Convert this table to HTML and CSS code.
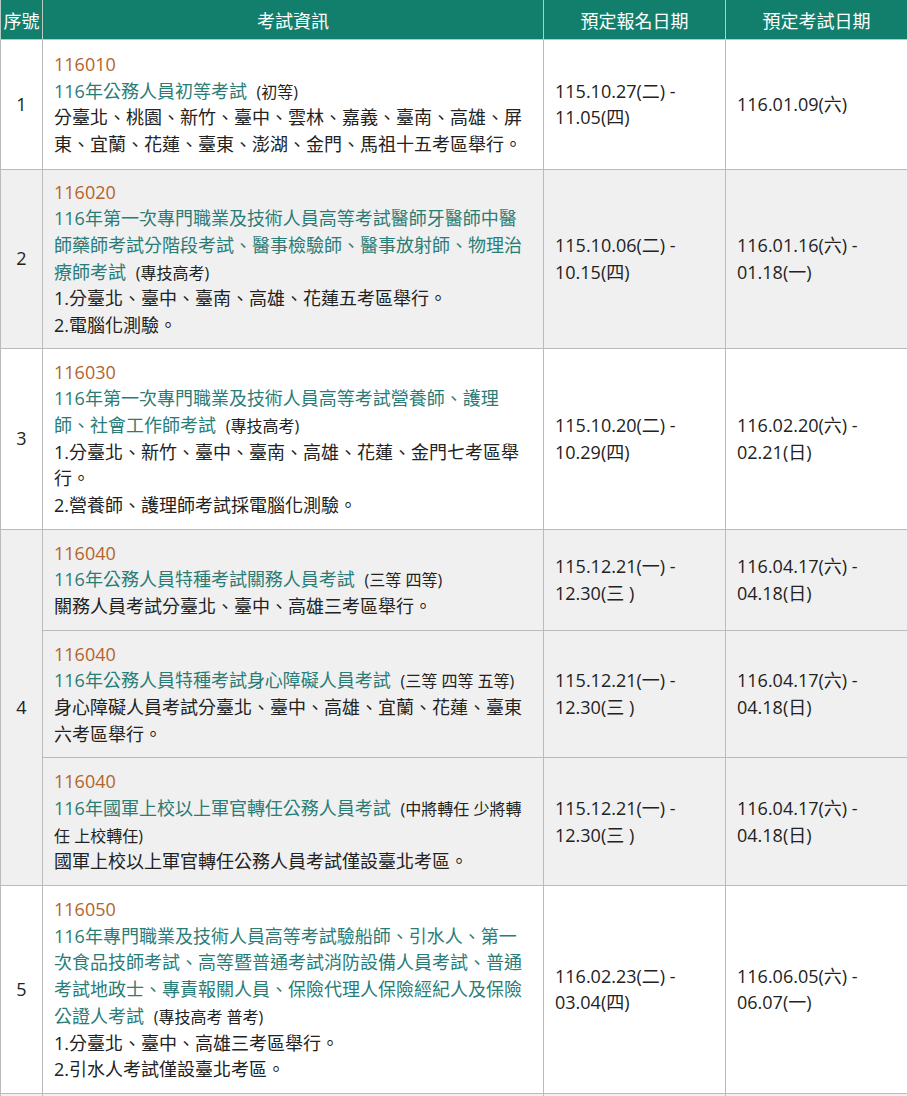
FILE: index.html
```html
<!DOCTYPE html>
<html lang="zh-Hant">
<head>
<meta charset="utf-8">
<title>考試日程</title>
<link rel="stylesheet" href="styles.css">
</head>
<body>
<table class="sched">
  <colgroup>
    <col class="c-no">
    <col class="c-info">
    <col class="c-date">
    <col class="c-date">
  </colgroup>
  <thead>
    <tr>
      <th>序號</th>
      <th>考試資訊</th>
      <th>預定報名日期</th>
      <th>預定考試日期</th>
    </tr>
  </thead>
  <tbody>
    <tr class="first">
      <td class="no">1</td>
      <td class="info">
        <div class="code">116010</div>
        <div><span class="title">116年公務人員初等考試</span> <span class="lvl">(初等)</span></div>
        <div>分臺北、桃園、新竹、臺中、雲林、嘉義、臺南、高雄、屏東、宜蘭、花蓮、臺東、澎湖、金門、馬祖十五考區舉行。</div>
      </td>
      <td class="date">115.10.27(二) -<br>11.05(四)</td>
      <td class="date">116.01.09(六)</td>
    </tr>
    <tr class="alt tight">
      <td class="no">2</td>
      <td class="info">
        <div class="code">116020</div>
        <div><span class="title">116年第一次專門職業及技術人員高等考試醫師牙醫師中醫師藥師考試分階段考試、醫事檢驗師、醫事放射師、物理治療師考試</span> <span class="lvl">(專技高考)</span></div>
        <div>1.分臺北、臺中、臺南、高雄、花蓮五考區舉行。</div>
        <div>2.電腦化測驗。</div>
      </td>
      <td class="date">115.10.06(二) -<br>10.15(四)</td>
      <td class="date">116.01.16(六) -<br>01.18(一)</td>
    </tr>
    <tr>
      <td class="no">3</td>
      <td class="info">
        <div class="code">116030</div>
        <div><span class="title">116年第一次專門職業及技術人員高等考試營養師、護理師、社會工作師考試</span> <span class="lvl">(專技高考)</span></div>
        <div>1.分臺北、新竹、臺中、臺南、高雄、花蓮、金門七考區舉行。</div>
        <div>2.營養師、護理師考試採電腦化測驗。</div>
      </td>
      <td class="date">115.10.20(二) -<br>10.29(四)</td>
      <td class="date">116.02.20(六) -<br>02.21(日)</td>
    </tr>
    <tr class="alt">
      <td class="no" rowspan="3">4</td>
      <td class="info">
        <div class="code">116040</div>
        <div><span class="title">116年公務人員特種考試關務人員考試</span> <span class="lvl">(三等 四等)</span></div>
        <div>關務人員考試分臺北、臺中、高雄三考區舉行。</div>
      </td>
      <td class="date">115.12.21(一) -<br>12.30(三 )</td>
      <td class="date">116.04.17(六) -<br>04.18(日)</td>
    </tr>
    <tr class="alt">
      <td class="info">
        <div class="code">116040</div>
        <div><span class="title">116年公務人員特種考試身心障礙人員考試</span> <span class="lvl">(三等 四等 五等)</span></div>
        <div>身心障礙人員考試分臺北、臺中、高雄、宜蘭、花蓮、臺東六考區舉行。</div>
      </td>
      <td class="date">115.12.21(一) -<br>12.30(三 )</td>
      <td class="date">116.04.17(六) -<br>04.18(日)</td>
    </tr>
    <tr class="alt">
      <td class="info">
        <div class="code">116040</div>
        <div><span class="title">116年國軍上校以上軍官轉任公務人員考試</span> <span class="lvl">(中將轉任 少將轉任 上校轉任)</span></div>
        <div>國軍上校以上軍官轉任公務人員考試僅設臺北考區。</div>
      </td>
      <td class="date">115.12.21(一) -<br>12.30(三 )</td>
      <td class="date">116.04.17(六) -<br>04.18(日)</td>
    </tr>
    <tr>
      <td class="no">5</td>
      <td class="info">
        <div class="code">116050</div>
        <div><span class="title">116年專門職業及技術人員高等考試驗船師、引水人、第一次食品技師考試、高等暨普通考試消防設備人員考試、普通考試地政士、專責報關人員、保險代理人保險經紀人及保險公證人考試</span> <span class="lvl">(專技高考 普考)</span></div>
        <div>1.分臺北、臺中、高雄三考區舉行。</div>
        <div>2.引水人考試僅設臺北考區。</div>
      </td>
      <td class="date">116.02.23(二) -<br>03.04(四)</td>
      <td class="date">116.06.05(六) -<br>06.07(一)</td>
    </tr>
    <tr class="alt">
      <td class="no">6</td>
      <td class="info">
        <div class="code">116060</div>
        <div>&nbsp;</div>
      </td>
      <td class="date">&nbsp;</td>
      <td class="date">&nbsp;</td>
    </tr>
  </tbody>
</table>
</body>
</html>
```

FILE: styles.css
```css
html, body {
  margin: 0;
  padding: 0;
  background: #ffffff;
}

body {
  font-family: "Open Sans", "Noto Sans CJK TC", sans-serif;
  color: #222222;
}

.sched {
  width: 907px;
  border-collapse: collapse;
  table-layout: fixed;
}

.c-no { width: 42px; }
.c-info { width: 501px; }
.c-date { width: 182px; }

.sched th {
  background: #127e6c;
  color: #ffffff;
  font-weight: normal;
  font-size: 18px;
  height: 39px;
  padding: 0;
  text-align: center;
  vertical-align: middle;
  border: 1px solid #b9c9c4;
  border-top: none;
}

.sched td {
  border: 1px solid #bbbbbb;
  font-size: 18px;
  line-height: 26.67px;
  vertical-align: middle;
  padding: 10px 11px;
}

.sched tr.first td {
  padding-top: 11px;
  padding-bottom: 11px;
}

.sched tr.tight td {
  padding-top: 9px;
  padding-bottom: 9px;
}

.sched tr.alt td {
  background: #f0f0f0;
}

.sched td.no,
.sched tr.first td.no,
.sched tr.tight td.no {
  text-align: center;
  padding: 0;
}

.sched td.info {
  vertical-align: top;
}

.code {
  color: #b5632d;
}

.title {
  color: #2a7c77;
  margin-right: 5px;
}

.lvl {
  font-size: 16px;
  line-height: 22px;
  color: #222222;
}

.date {
  text-align: left;
}
```
